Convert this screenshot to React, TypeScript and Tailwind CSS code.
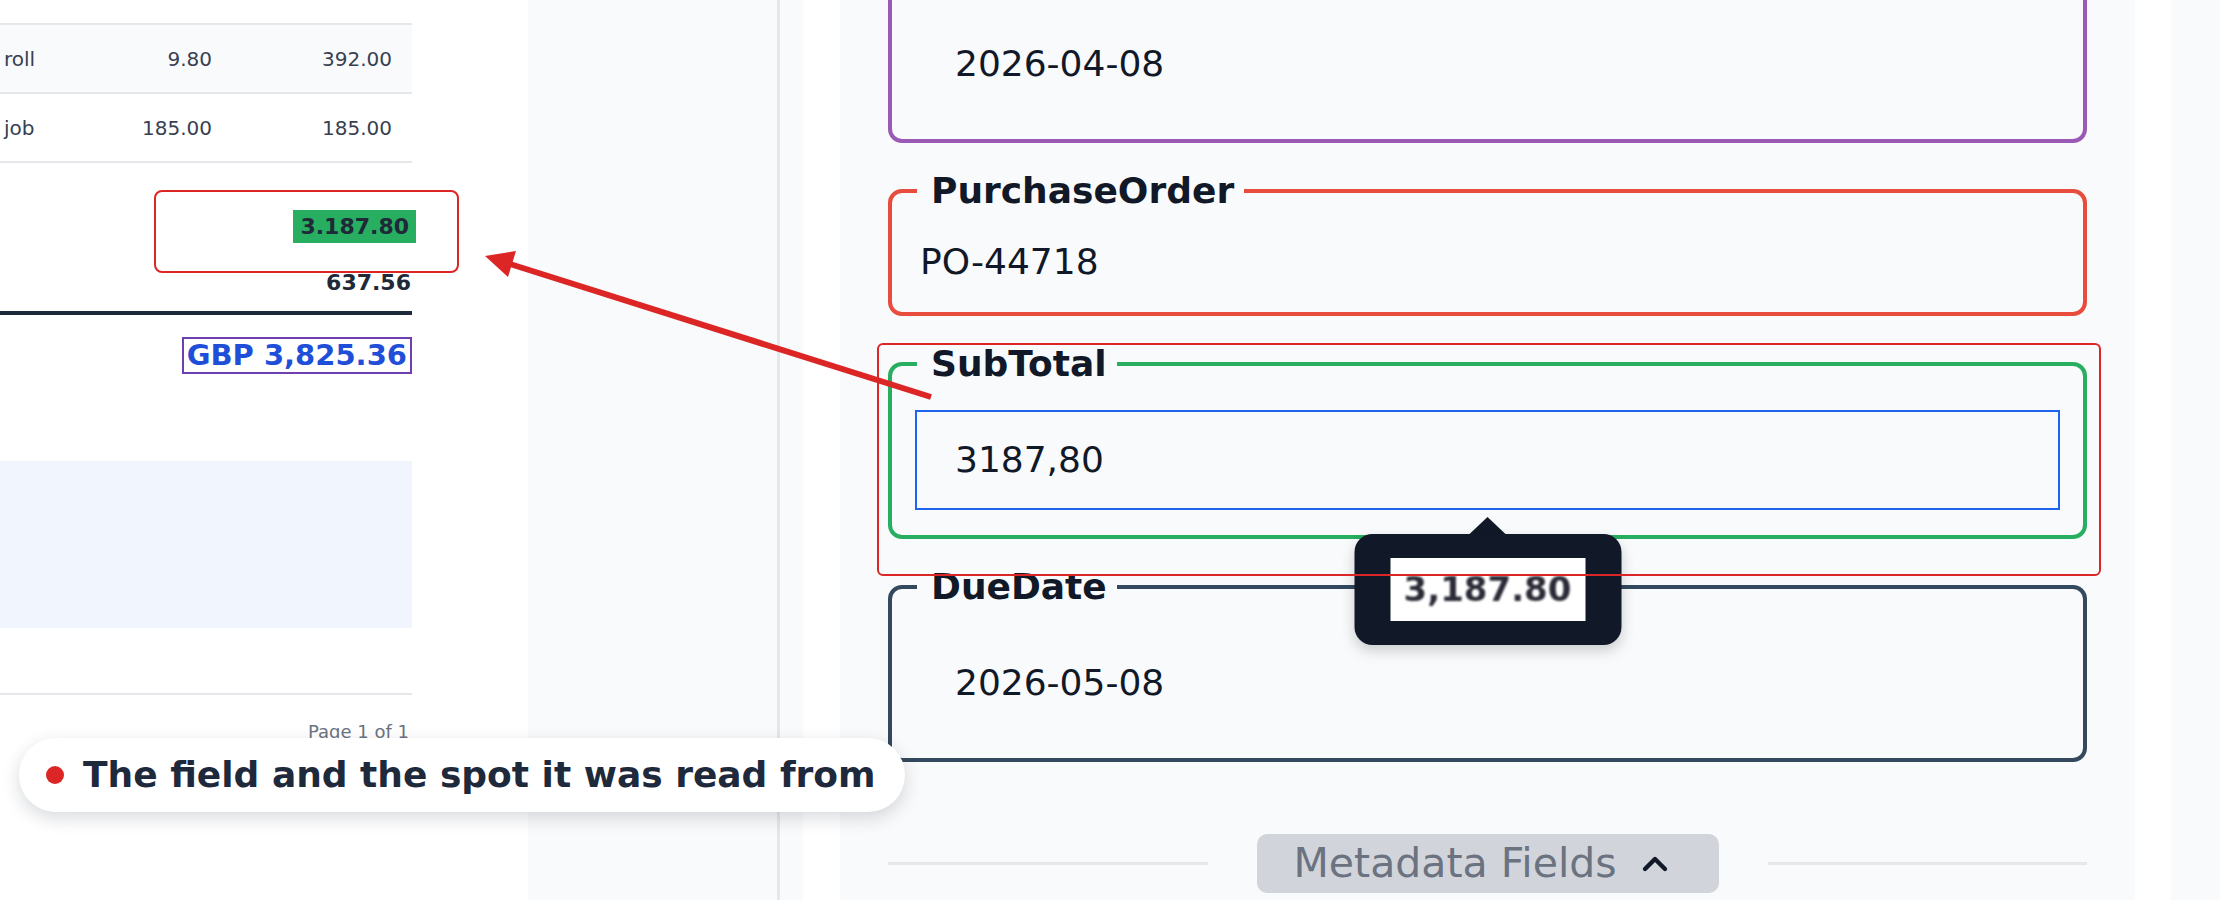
import { ChevronUp } from 'lucide-react';

type FieldProps = {
  label: string;
  borderClass: string;
  value: string;
  boxed?: boolean;
};

function InputField({ label, borderClass, value, boxed }: FieldProps) {
  return (
    <fieldset className={`rounded-[14px] border-4 ${borderClass} px-[25px] pt-[25px] pb-[25px]`}>
      <legend className="pl-[14px] pr-[10px] text-[36px] font-bold leading-[42px] text-[#111827]">{label}</legend>
      <div
        className={`-mx-[2px] flex h-[100px] items-center border-2 pl-[38px] text-[36px] text-[#111827] ${
          boxed ? 'border-[#1f63ef]' : 'border-transparent'
        }`}
      >
        {value}
      </div>
    </fieldset>
  );
}

export default function App() {
  return (
    <div className="relative flex h-[900px] w-[2220px] overflow-hidden bg-white font-['DejaVu_Sans',sans-serif]">
      {/* document preview */}
      <div className="w-[528px] shrink-0 bg-white">
        <div className="w-[412px] pt-[23px] text-[#374151]">
          <div className="border-t-2 border-[#e5e7eb]">
            <div className="flex h-[69px] items-center border-b-2 border-[#e5e7eb] bg-[#f9fafb] text-[20px]">
              <span className="pl-[4px]">roll</span>
              <span className="ml-auto w-[120px] text-right">9.80</span>
              <span className="w-[200px] pr-[20px] text-right">392.00</span>
            </div>
            <div className="flex h-[69px] items-center border-b-2 border-[#e5e7eb] text-[20px]">
              <span className="pl-[4px]">job</span>
              <span className="ml-auto w-[120px] text-right">185.00</span>
              <span className="w-[200px] pr-[20px] text-right">185.00</span>
            </div>
          </div>

          <div className="mt-[43px] flex h-[40px] items-center justify-end">
            <span className="mr-[-4px] bg-[#27ae60] px-[7px] text-[22px] font-bold leading-[33px] text-[#1f2937]">3.187.80</span>
          </div>
          <div className="mt-[16px] flex h-[40px] items-center justify-end pr-[1px] text-[22px] font-bold text-[#1f2937]">
            637.56
          </div>
          <div className="mt-[9px] h-[4px] bg-[#1e293b]" />
          <div className="mt-[22px] flex justify-end">
            <span className="border-2 border-[#6d3fb0] px-[3px] text-[29px] font-bold leading-[33px] text-[#1f4fd8]">GBP 3,825.36</span>
          </div>
          <div className="mt-[87px] h-[167px] bg-[#f0f5fe]" />
          <div className="mt-[65px] h-[2px] bg-[#e5e7eb]" />
          <div className="mt-[26px] pr-[3px] text-right text-[18px] leading-[22px] text-[#6b7280]">Page 1 of 1</div>
        </div>
      </div>

      <div className="w-[249px] shrink-0 bg-[#f9fafb]" />
      <div className="w-[3px] shrink-0 bg-[#e5e7eb]" />
      <div className="w-[23px] shrink-0 bg-[#f9fafb]" />
      <div className="w-[37px] shrink-0 bg-white" />

      {/* extracted fields panel */}
      <div className="w-[1295px] shrink-0 bg-[#f9fafb] px-[48px]">
        <div className="-mt-[53px] flex flex-col gap-[27px]">
          <InputField label="InvoiceDate" borderClass="border-[#9b59b6]" value="2026-04-08" />

          <fieldset className="rounded-[14px] border-4 border-[#e74c3c] px-[25px] pt-[29px] pb-[29px]">
            <legend className="pl-[14px] pr-[10px] text-[36px] font-bold leading-[42px] text-[#111827]">PurchaseOrder</legend>
            <div className="pl-[3px] text-[36px] leading-[42px] text-[#111827]">PO-44718</div>
          </fieldset>

          <div className="relative">
            <InputField label="SubTotal" borderClass="border-[#27ae60]" value="3187,80" boxed />
            <div className="absolute top-[174px] left-1/2 z-10 flex -translate-x-1/2 flex-col items-center">
              <div className="h-0 w-0 border-x-[18px] border-b-[17px] border-x-transparent border-b-[#111827]" />
              <div className="rounded-[18px] bg-[#111827] px-[36px] py-[24px] shadow-[0_6px_14px_rgba(0,0,0,0.18)]">
                <div className="flex h-[63px] w-[195px] items-center justify-center bg-white">
                  <span className="text-[34px] font-bold text-[#2a2b36] [filter:blur(0.9px)]">3,187.80</span>
                </div>
              </div>
            </div>
            <div className="absolute top-0 left-[-11px] right-[-14px] z-20 h-[233px] rounded-[6px] border-2 border-[#dc2626]" />
          </div>

          <InputField label="DueDate" borderClass="border-[#34495e]" value="2026-05-08" />
        </div>

        <div className="mt-[72px] flex items-center gap-[49px]">
          <div className="h-[3px] flex-1 bg-[#e5e7eb]" />
          <div className="flex h-[59px] w-[462px] items-center gap-[18px] rounded-[10px] bg-[#d1d5db] pl-[37px] text-[41px] text-[#6b7280]">
            <span>Metadata Fields</span>
            <ChevronUp size={40} strokeWidth={2.6} className="text-[#111827]" />
          </div>
          <div className="h-[3px] flex-1 bg-[#e5e7eb]" />
        </div>
      </div>

      <div className="w-[36px] shrink-0 bg-white" />
      <div className="w-[49px] shrink-0 bg-[#f9fafb]" />

      {/* spot in the document */}
      <div className="absolute top-[190px] left-[154px] h-[83px] w-[305px] rounded-[8px] border-2 border-[#dc2626]" />

      {/* arrow from field to spot */}
      <svg className="pointer-events-none absolute top-0 left-0 z-30" width="2220" height="900">
        <line x1="510" y1="264" x2="931" y2="397" stroke="#dc2626" strokeWidth="6" />
        <polygon points="485,256 516,251 508,277" fill="#dc2626" />
      </svg>

      {/* caption */}
      <div className="absolute top-[738px] left-[19px] z-30 flex h-[74px] w-[886px] items-center gap-[19px] rounded-full bg-white pl-[27px] shadow-[0_6px_18px_rgba(15,23,42,0.16)]">
        <span className="h-[18px] w-[18px] rounded-full bg-[#dc2626]" />
        <span className="text-[36px] font-bold text-[#1e293b]">The field and the spot it was read from</span>
      </div>
    </div>
  );
}
